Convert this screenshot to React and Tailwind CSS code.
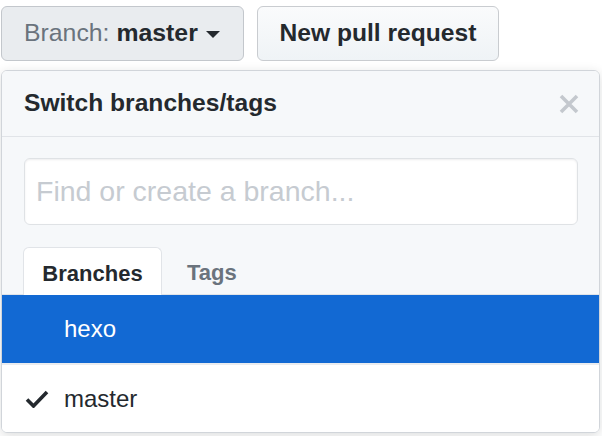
import React from "react"

const CheckIcon = () => (
  <svg width="24" height="19" viewBox="0 0 24 19" fill="none">
    <path d="M2 10.5 L8.5 17 L22 3" stroke="#24292e" strokeWidth="3.6" strokeLinecap="butt" strokeLinejoin="miter" />
  </svg>
)

const CloseIcon = () => (
  <svg width="20" height="20" viewBox="0 0 20 20">
    <path d="M2 2 L18 18 M18 2 L2 18" stroke="#c4c8ce" strokeWidth="3.6" />
  </svg>
)

const App = () => {
  return (
    <div className="relative h-[436px] w-[602px] overflow-hidden bg-white font-['Liberation_Sans',Arial,sans-serif] text-[#24292e]">
      <div className="flex gap-[13px] pl-[1px] pt-[6px]">
        <button className="flex h-[55px] w-[243px] items-center rounded-[6px] border border-[#c3c7cc] bg-[#e9ecef] pl-[22px] text-[24.8px] leading-none">
          <span className="text-[#6a737d]">Branch:</span>
          <span className="ml-[7px] font-bold text-[#24292e]">master</span>
          <span className="ml-[8px] mt-[1px] h-0 w-0 border-x-[7px] border-t-[7px] border-x-transparent border-t-[#24292e]" />
        </button>
        <button className="flex h-[55px] w-[242px] items-center justify-center rounded-[6px] border border-[#c9ccd0] bg-gradient-to-b from-[#fafbfc] to-[#eff3f6] text-[24.6px] font-bold leading-none">
          New pull request
        </button>
      </div>

      <div className="ml-[1px] mt-[9px] w-[599px] overflow-hidden rounded-[6px] border border-[#d1d5da] shadow-[0_3px_12px_rgba(27,31,35,0.15)]">
        <div className="flex h-[66px] items-center justify-between border-b border-[#e1e4e8] bg-[#f6f8fa] pl-[22px] pr-[20px]">
          <span className="text-[24.6px] font-bold">Switch branches/tags</span>
          <CloseIcon />
        </div>

        <div className="bg-[#f6f8fa] pt-[21px]">
          <div className="pl-[22px] pr-[21px]">
            <div className="flex h-[67px] items-center rounded-[6px] border border-[#dfe2e5] bg-white pl-[11px] text-[28.5px] text-[#c6cbd1] shadow-[inset_0_1px_2px_rgba(27,31,35,0.075)]">
              Find or create a branch...
            </div>
          </div>
          <div className="mt-[23px] flex h-[47px] items-end border-b border-[#e1e4e8] pl-[21px]">
            <div className="-mb-px flex h-[48px] w-[139px] items-center justify-center rounded-t-[6px] border border-b-0 border-[#e1e4e8] bg-white pt-[3px] text-[22px] font-bold">
              Branches
            </div>
            <div className="flex h-[47px] items-center pl-[25px] pt-[3px] text-[22px] font-bold text-[#6a737d]">
              Tags
            </div>
          </div>
        </div>

        <div className="flex h-[68px] items-center bg-[#1269d3] pl-[62px] text-[24px] text-white">
          hexo
        </div>
        <div className="flex h-[69px] items-center border-t-2 border-[#eaecef] bg-white pl-[23px] text-[24px]">
          <CheckIcon />
          <span className="ml-[15px]">master</span>
        </div>
      </div>
    </div>
  )
}

export default App
